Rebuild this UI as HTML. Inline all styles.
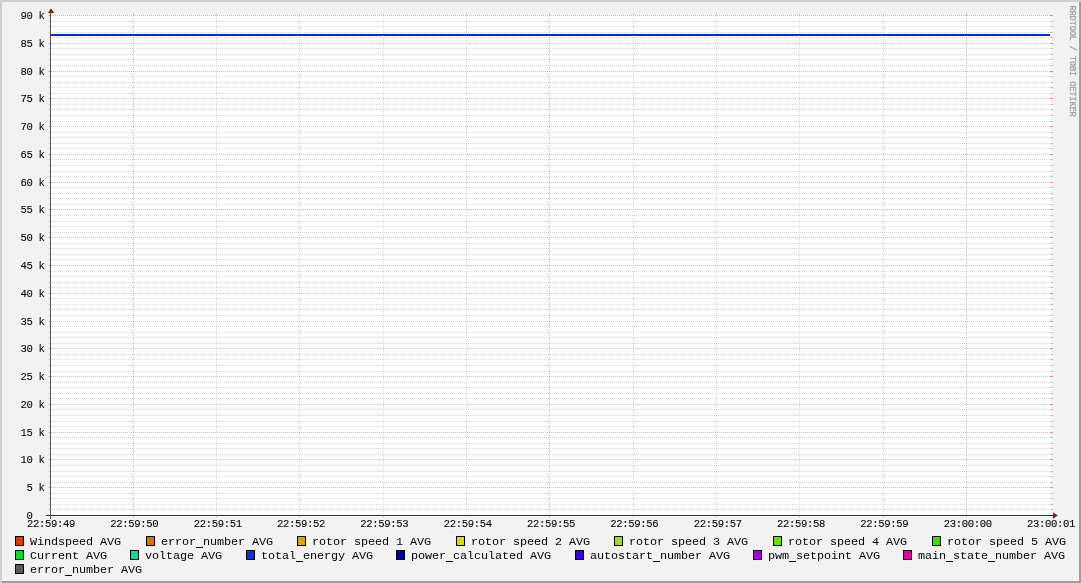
<!DOCTYPE html><html><head><meta charset="utf-8"><style>html,body{margin:0;padding:0;background:#f2f2f2;}svg{display:block;position:absolute;left:0;top:0;}text{font-family:"Liberation Mono",monospace;white-space:pre;}</style></head><body>
<svg width="1081" height="583" viewBox="0 0 1081 583">
<defs><pattern id="hg" patternUnits="userSpaceOnUse" x="0" y="0" width="2" height="1"><rect x="0" y="0" width="1" height="1" fill="rgba(144,144,144,0.35)"/></pattern><pattern id="hm" patternUnits="userSpaceOnUse" x="1" y="0" width="2" height="1"><rect x="0" y="0" width="1" height="1" fill="rgba(228,79,79,0.45)"/></pattern><pattern id="vg" patternUnits="userSpaceOnUse" x="0" y="1" width="1" height="2"><rect x="0" y="0" width="1" height="1" fill="rgba(144,144,144,0.35)"/></pattern><pattern id="vm" patternUnits="userSpaceOnUse" x="0" y="1" width="1" height="2"><rect x="0" y="0" width="1" height="1" fill="rgba(228,79,79,0.45)"/></pattern></defs>
<g shape-rendering="crispEdges">
<rect x="0" y="0" width="1081" height="583" fill="#f2f2f2"/>
<rect x="0" y="0" width="1081" height="2" fill="#cfcfcf"/>
<rect x="0" y="0" width="2" height="583" fill="#cfcfcf"/>
<rect x="1079" y="2" width="2" height="581" fill="#9e9e9e"/>
<rect x="2" y="581" width="1079" height="2" fill="#9e9e9e"/>
<rect x="50" y="15" width="1001" height="502" fill="#ffffff"/>
<rect x="51" y="34" width="999" height="2" fill="#0028e0"/>
<rect x="48" y="515" width="1002" height="1" fill="url(#hm)"/>
<rect x="48" y="515" width="1" height="1" fill="#f6caca"/>
<rect x="49" y="515" width="1" height="1" fill="#e58c8c"/>
<rect x="1050" y="515" width="3" height="1" fill="#e58c8c"/>
<rect x="52" y="509" width="998" height="1" fill="url(#hg)"/>
<rect x="48" y="509" width="1" height="1" fill="#e2e2e2"/>
<rect x="49" y="509" width="1" height="1" fill="#c4c4c4"/>
<rect x="1050" y="509" width="3" height="1" fill="#c4c4c4"/>
<rect x="52" y="504" width="998" height="1" fill="url(#hg)"/>
<rect x="48" y="504" width="1" height="1" fill="#e2e2e2"/>
<rect x="49" y="504" width="1" height="1" fill="#c4c4c4"/>
<rect x="1050" y="504" width="3" height="1" fill="#c4c4c4"/>
<rect x="52" y="498" width="998" height="1" fill="url(#hg)"/>
<rect x="48" y="498" width="1" height="1" fill="#e2e2e2"/>
<rect x="49" y="498" width="1" height="1" fill="#c4c4c4"/>
<rect x="1050" y="498" width="3" height="1" fill="#c4c4c4"/>
<rect x="52" y="493" width="998" height="1" fill="url(#hg)"/>
<rect x="48" y="493" width="1" height="1" fill="#e2e2e2"/>
<rect x="49" y="493" width="1" height="1" fill="#c4c4c4"/>
<rect x="1050" y="493" width="3" height="1" fill="#c4c4c4"/>
<rect x="48" y="487" width="1002" height="1" fill="url(#hm)"/>
<rect x="48" y="487" width="1" height="1" fill="#f6caca"/>
<rect x="49" y="487" width="1" height="1" fill="#e58c8c"/>
<rect x="1050" y="487" width="3" height="1" fill="#e58c8c"/>
<rect x="52" y="482" width="998" height="1" fill="url(#hg)"/>
<rect x="48" y="482" width="1" height="1" fill="#e2e2e2"/>
<rect x="49" y="482" width="1" height="1" fill="#c4c4c4"/>
<rect x="1050" y="482" width="3" height="1" fill="#c4c4c4"/>
<rect x="52" y="476" width="998" height="1" fill="url(#hg)"/>
<rect x="48" y="476" width="1" height="1" fill="#e2e2e2"/>
<rect x="49" y="476" width="1" height="1" fill="#c4c4c4"/>
<rect x="1050" y="476" width="3" height="1" fill="#c4c4c4"/>
<rect x="52" y="471" width="998" height="1" fill="url(#hg)"/>
<rect x="48" y="471" width="1" height="1" fill="#e2e2e2"/>
<rect x="49" y="471" width="1" height="1" fill="#c4c4c4"/>
<rect x="1050" y="471" width="3" height="1" fill="#c4c4c4"/>
<rect x="52" y="465" width="998" height="1" fill="url(#hg)"/>
<rect x="48" y="465" width="1" height="1" fill="#e2e2e2"/>
<rect x="49" y="465" width="1" height="1" fill="#c4c4c4"/>
<rect x="1050" y="465" width="3" height="1" fill="#c4c4c4"/>
<rect x="48" y="459" width="1002" height="1" fill="url(#hm)"/>
<rect x="48" y="459" width="1" height="1" fill="#f6caca"/>
<rect x="49" y="459" width="1" height="1" fill="#e58c8c"/>
<rect x="1050" y="459" width="3" height="1" fill="#e58c8c"/>
<rect x="52" y="454" width="998" height="1" fill="url(#hg)"/>
<rect x="48" y="454" width="1" height="1" fill="#e2e2e2"/>
<rect x="49" y="454" width="1" height="1" fill="#c4c4c4"/>
<rect x="1050" y="454" width="3" height="1" fill="#c4c4c4"/>
<rect x="52" y="448" width="998" height="1" fill="url(#hg)"/>
<rect x="48" y="448" width="1" height="1" fill="#e2e2e2"/>
<rect x="49" y="448" width="1" height="1" fill="#c4c4c4"/>
<rect x="1050" y="448" width="3" height="1" fill="#c4c4c4"/>
<rect x="52" y="443" width="998" height="1" fill="url(#hg)"/>
<rect x="48" y="443" width="1" height="1" fill="#e2e2e2"/>
<rect x="49" y="443" width="1" height="1" fill="#c4c4c4"/>
<rect x="1050" y="443" width="3" height="1" fill="#c4c4c4"/>
<rect x="52" y="437" width="998" height="1" fill="url(#hg)"/>
<rect x="48" y="437" width="1" height="1" fill="#e2e2e2"/>
<rect x="49" y="437" width="1" height="1" fill="#c4c4c4"/>
<rect x="1050" y="437" width="3" height="1" fill="#c4c4c4"/>
<rect x="48" y="432" width="1002" height="1" fill="url(#hm)"/>
<rect x="48" y="432" width="1" height="1" fill="#f6caca"/>
<rect x="49" y="432" width="1" height="1" fill="#e58c8c"/>
<rect x="1050" y="432" width="3" height="1" fill="#e58c8c"/>
<rect x="52" y="426" width="998" height="1" fill="url(#hg)"/>
<rect x="48" y="426" width="1" height="1" fill="#e2e2e2"/>
<rect x="49" y="426" width="1" height="1" fill="#c4c4c4"/>
<rect x="1050" y="426" width="3" height="1" fill="#c4c4c4"/>
<rect x="52" y="421" width="998" height="1" fill="url(#hg)"/>
<rect x="48" y="421" width="1" height="1" fill="#e2e2e2"/>
<rect x="49" y="421" width="1" height="1" fill="#c4c4c4"/>
<rect x="1050" y="421" width="3" height="1" fill="#c4c4c4"/>
<rect x="52" y="415" width="998" height="1" fill="url(#hg)"/>
<rect x="48" y="415" width="1" height="1" fill="#e2e2e2"/>
<rect x="49" y="415" width="1" height="1" fill="#c4c4c4"/>
<rect x="1050" y="415" width="3" height="1" fill="#c4c4c4"/>
<rect x="52" y="409" width="998" height="1" fill="url(#hg)"/>
<rect x="48" y="409" width="1" height="1" fill="#e2e2e2"/>
<rect x="49" y="409" width="1" height="1" fill="#c4c4c4"/>
<rect x="1050" y="409" width="3" height="1" fill="#c4c4c4"/>
<rect x="48" y="404" width="1002" height="1" fill="url(#hm)"/>
<rect x="48" y="404" width="1" height="1" fill="#f6caca"/>
<rect x="49" y="404" width="1" height="1" fill="#e58c8c"/>
<rect x="1050" y="404" width="3" height="1" fill="#e58c8c"/>
<rect x="52" y="398" width="998" height="1" fill="url(#hg)"/>
<rect x="48" y="398" width="1" height="1" fill="#e2e2e2"/>
<rect x="49" y="398" width="1" height="1" fill="#c4c4c4"/>
<rect x="1050" y="398" width="3" height="1" fill="#c4c4c4"/>
<rect x="52" y="393" width="998" height="1" fill="url(#hg)"/>
<rect x="48" y="393" width="1" height="1" fill="#e2e2e2"/>
<rect x="49" y="393" width="1" height="1" fill="#c4c4c4"/>
<rect x="1050" y="393" width="3" height="1" fill="#c4c4c4"/>
<rect x="52" y="387" width="998" height="1" fill="url(#hg)"/>
<rect x="48" y="387" width="1" height="1" fill="#e2e2e2"/>
<rect x="49" y="387" width="1" height="1" fill="#c4c4c4"/>
<rect x="1050" y="387" width="3" height="1" fill="#c4c4c4"/>
<rect x="52" y="382" width="998" height="1" fill="url(#hg)"/>
<rect x="48" y="382" width="1" height="1" fill="#e2e2e2"/>
<rect x="49" y="382" width="1" height="1" fill="#c4c4c4"/>
<rect x="1050" y="382" width="3" height="1" fill="#c4c4c4"/>
<rect x="48" y="376" width="1002" height="1" fill="url(#hm)"/>
<rect x="48" y="376" width="1" height="1" fill="#f6caca"/>
<rect x="49" y="376" width="1" height="1" fill="#e58c8c"/>
<rect x="1050" y="376" width="3" height="1" fill="#e58c8c"/>
<rect x="52" y="371" width="998" height="1" fill="url(#hg)"/>
<rect x="48" y="371" width="1" height="1" fill="#e2e2e2"/>
<rect x="49" y="371" width="1" height="1" fill="#c4c4c4"/>
<rect x="1050" y="371" width="3" height="1" fill="#c4c4c4"/>
<rect x="52" y="365" width="998" height="1" fill="url(#hg)"/>
<rect x="48" y="365" width="1" height="1" fill="#e2e2e2"/>
<rect x="49" y="365" width="1" height="1" fill="#c4c4c4"/>
<rect x="1050" y="365" width="3" height="1" fill="#c4c4c4"/>
<rect x="52" y="359" width="998" height="1" fill="url(#hg)"/>
<rect x="48" y="359" width="1" height="1" fill="#e2e2e2"/>
<rect x="49" y="359" width="1" height="1" fill="#c4c4c4"/>
<rect x="1050" y="359" width="3" height="1" fill="#c4c4c4"/>
<rect x="52" y="354" width="998" height="1" fill="url(#hg)"/>
<rect x="48" y="354" width="1" height="1" fill="#e2e2e2"/>
<rect x="49" y="354" width="1" height="1" fill="#c4c4c4"/>
<rect x="1050" y="354" width="3" height="1" fill="#c4c4c4"/>
<rect x="48" y="348" width="1002" height="1" fill="url(#hm)"/>
<rect x="48" y="348" width="1" height="1" fill="#f6caca"/>
<rect x="49" y="348" width="1" height="1" fill="#e58c8c"/>
<rect x="1050" y="348" width="3" height="1" fill="#e58c8c"/>
<rect x="52" y="343" width="998" height="1" fill="url(#hg)"/>
<rect x="48" y="343" width="1" height="1" fill="#e2e2e2"/>
<rect x="49" y="343" width="1" height="1" fill="#c4c4c4"/>
<rect x="1050" y="343" width="3" height="1" fill="#c4c4c4"/>
<rect x="52" y="337" width="998" height="1" fill="url(#hg)"/>
<rect x="48" y="337" width="1" height="1" fill="#e2e2e2"/>
<rect x="49" y="337" width="1" height="1" fill="#c4c4c4"/>
<rect x="1050" y="337" width="3" height="1" fill="#c4c4c4"/>
<rect x="52" y="332" width="998" height="1" fill="url(#hg)"/>
<rect x="48" y="332" width="1" height="1" fill="#e2e2e2"/>
<rect x="49" y="332" width="1" height="1" fill="#c4c4c4"/>
<rect x="1050" y="332" width="3" height="1" fill="#c4c4c4"/>
<rect x="52" y="326" width="998" height="1" fill="url(#hg)"/>
<rect x="48" y="326" width="1" height="1" fill="#e2e2e2"/>
<rect x="49" y="326" width="1" height="1" fill="#c4c4c4"/>
<rect x="1050" y="326" width="3" height="1" fill="#c4c4c4"/>
<rect x="48" y="321" width="1002" height="1" fill="url(#hm)"/>
<rect x="48" y="321" width="1" height="1" fill="#f6caca"/>
<rect x="49" y="321" width="1" height="1" fill="#e58c8c"/>
<rect x="1050" y="321" width="3" height="1" fill="#e58c8c"/>
<rect x="52" y="315" width="998" height="1" fill="url(#hg)"/>
<rect x="48" y="315" width="1" height="1" fill="#e2e2e2"/>
<rect x="49" y="315" width="1" height="1" fill="#c4c4c4"/>
<rect x="1050" y="315" width="3" height="1" fill="#c4c4c4"/>
<rect x="52" y="309" width="998" height="1" fill="url(#hg)"/>
<rect x="48" y="309" width="1" height="1" fill="#e2e2e2"/>
<rect x="49" y="309" width="1" height="1" fill="#c4c4c4"/>
<rect x="1050" y="309" width="3" height="1" fill="#c4c4c4"/>
<rect x="52" y="304" width="998" height="1" fill="url(#hg)"/>
<rect x="48" y="304" width="1" height="1" fill="#e2e2e2"/>
<rect x="49" y="304" width="1" height="1" fill="#c4c4c4"/>
<rect x="1050" y="304" width="3" height="1" fill="#c4c4c4"/>
<rect x="52" y="298" width="998" height="1" fill="url(#hg)"/>
<rect x="48" y="298" width="1" height="1" fill="#e2e2e2"/>
<rect x="49" y="298" width="1" height="1" fill="#c4c4c4"/>
<rect x="1050" y="298" width="3" height="1" fill="#c4c4c4"/>
<rect x="48" y="293" width="1002" height="1" fill="url(#hm)"/>
<rect x="48" y="293" width="1" height="1" fill="#f6caca"/>
<rect x="49" y="293" width="1" height="1" fill="#e58c8c"/>
<rect x="1050" y="293" width="3" height="1" fill="#e58c8c"/>
<rect x="52" y="287" width="998" height="1" fill="url(#hg)"/>
<rect x="48" y="287" width="1" height="1" fill="#e2e2e2"/>
<rect x="49" y="287" width="1" height="1" fill="#c4c4c4"/>
<rect x="1050" y="287" width="3" height="1" fill="#c4c4c4"/>
<rect x="52" y="282" width="998" height="1" fill="url(#hg)"/>
<rect x="48" y="282" width="1" height="1" fill="#e2e2e2"/>
<rect x="49" y="282" width="1" height="1" fill="#c4c4c4"/>
<rect x="1050" y="282" width="3" height="1" fill="#c4c4c4"/>
<rect x="52" y="276" width="998" height="1" fill="url(#hg)"/>
<rect x="48" y="276" width="1" height="1" fill="#e2e2e2"/>
<rect x="49" y="276" width="1" height="1" fill="#c4c4c4"/>
<rect x="1050" y="276" width="3" height="1" fill="#c4c4c4"/>
<rect x="52" y="271" width="998" height="1" fill="url(#hg)"/>
<rect x="48" y="271" width="1" height="1" fill="#e2e2e2"/>
<rect x="49" y="271" width="1" height="1" fill="#c4c4c4"/>
<rect x="1050" y="271" width="3" height="1" fill="#c4c4c4"/>
<rect x="48" y="265" width="1002" height="1" fill="url(#hm)"/>
<rect x="48" y="265" width="1" height="1" fill="#f6caca"/>
<rect x="49" y="265" width="1" height="1" fill="#e58c8c"/>
<rect x="1050" y="265" width="3" height="1" fill="#e58c8c"/>
<rect x="52" y="259" width="998" height="1" fill="url(#hg)"/>
<rect x="48" y="259" width="1" height="1" fill="#e2e2e2"/>
<rect x="49" y="259" width="1" height="1" fill="#c4c4c4"/>
<rect x="1050" y="259" width="3" height="1" fill="#c4c4c4"/>
<rect x="52" y="254" width="998" height="1" fill="url(#hg)"/>
<rect x="48" y="254" width="1" height="1" fill="#e2e2e2"/>
<rect x="49" y="254" width="1" height="1" fill="#c4c4c4"/>
<rect x="1050" y="254" width="3" height="1" fill="#c4c4c4"/>
<rect x="52" y="248" width="998" height="1" fill="url(#hg)"/>
<rect x="48" y="248" width="1" height="1" fill="#e2e2e2"/>
<rect x="49" y="248" width="1" height="1" fill="#c4c4c4"/>
<rect x="1050" y="248" width="3" height="1" fill="#c4c4c4"/>
<rect x="52" y="243" width="998" height="1" fill="url(#hg)"/>
<rect x="48" y="243" width="1" height="1" fill="#e2e2e2"/>
<rect x="49" y="243" width="1" height="1" fill="#c4c4c4"/>
<rect x="1050" y="243" width="3" height="1" fill="#c4c4c4"/>
<rect x="48" y="237" width="1002" height="1" fill="url(#hm)"/>
<rect x="48" y="237" width="1" height="1" fill="#f6caca"/>
<rect x="49" y="237" width="1" height="1" fill="#e58c8c"/>
<rect x="1050" y="237" width="3" height="1" fill="#e58c8c"/>
<rect x="52" y="232" width="998" height="1" fill="url(#hg)"/>
<rect x="48" y="232" width="1" height="1" fill="#e2e2e2"/>
<rect x="49" y="232" width="1" height="1" fill="#c4c4c4"/>
<rect x="1050" y="232" width="3" height="1" fill="#c4c4c4"/>
<rect x="52" y="226" width="998" height="1" fill="url(#hg)"/>
<rect x="48" y="226" width="1" height="1" fill="#e2e2e2"/>
<rect x="49" y="226" width="1" height="1" fill="#c4c4c4"/>
<rect x="1050" y="226" width="3" height="1" fill="#c4c4c4"/>
<rect x="52" y="221" width="998" height="1" fill="url(#hg)"/>
<rect x="48" y="221" width="1" height="1" fill="#e2e2e2"/>
<rect x="49" y="221" width="1" height="1" fill="#c4c4c4"/>
<rect x="1050" y="221" width="3" height="1" fill="#c4c4c4"/>
<rect x="52" y="215" width="998" height="1" fill="url(#hg)"/>
<rect x="48" y="215" width="1" height="1" fill="#e2e2e2"/>
<rect x="49" y="215" width="1" height="1" fill="#c4c4c4"/>
<rect x="1050" y="215" width="3" height="1" fill="#c4c4c4"/>
<rect x="48" y="209" width="1002" height="1" fill="url(#hm)"/>
<rect x="48" y="209" width="1" height="1" fill="#f6caca"/>
<rect x="49" y="209" width="1" height="1" fill="#e58c8c"/>
<rect x="1050" y="209" width="3" height="1" fill="#e58c8c"/>
<rect x="52" y="204" width="998" height="1" fill="url(#hg)"/>
<rect x="48" y="204" width="1" height="1" fill="#e2e2e2"/>
<rect x="49" y="204" width="1" height="1" fill="#c4c4c4"/>
<rect x="1050" y="204" width="3" height="1" fill="#c4c4c4"/>
<rect x="52" y="198" width="998" height="1" fill="url(#hg)"/>
<rect x="48" y="198" width="1" height="1" fill="#e2e2e2"/>
<rect x="49" y="198" width="1" height="1" fill="#c4c4c4"/>
<rect x="1050" y="198" width="3" height="1" fill="#c4c4c4"/>
<rect x="52" y="193" width="998" height="1" fill="url(#hg)"/>
<rect x="48" y="193" width="1" height="1" fill="#e2e2e2"/>
<rect x="49" y="193" width="1" height="1" fill="#c4c4c4"/>
<rect x="1050" y="193" width="3" height="1" fill="#c4c4c4"/>
<rect x="52" y="187" width="998" height="1" fill="url(#hg)"/>
<rect x="48" y="187" width="1" height="1" fill="#e2e2e2"/>
<rect x="49" y="187" width="1" height="1" fill="#c4c4c4"/>
<rect x="1050" y="187" width="3" height="1" fill="#c4c4c4"/>
<rect x="48" y="182" width="1002" height="1" fill="url(#hm)"/>
<rect x="48" y="182" width="1" height="1" fill="#f6caca"/>
<rect x="49" y="182" width="1" height="1" fill="#e58c8c"/>
<rect x="1050" y="182" width="3" height="1" fill="#e58c8c"/>
<rect x="52" y="176" width="998" height="1" fill="url(#hg)"/>
<rect x="48" y="176" width="1" height="1" fill="#e2e2e2"/>
<rect x="49" y="176" width="1" height="1" fill="#c4c4c4"/>
<rect x="1050" y="176" width="3" height="1" fill="#c4c4c4"/>
<rect x="52" y="171" width="998" height="1" fill="url(#hg)"/>
<rect x="48" y="171" width="1" height="1" fill="#e2e2e2"/>
<rect x="49" y="171" width="1" height="1" fill="#c4c4c4"/>
<rect x="1050" y="171" width="3" height="1" fill="#c4c4c4"/>
<rect x="52" y="165" width="998" height="1" fill="url(#hg)"/>
<rect x="48" y="165" width="1" height="1" fill="#e2e2e2"/>
<rect x="49" y="165" width="1" height="1" fill="#c4c4c4"/>
<rect x="1050" y="165" width="3" height="1" fill="#c4c4c4"/>
<rect x="52" y="159" width="998" height="1" fill="url(#hg)"/>
<rect x="48" y="159" width="1" height="1" fill="#e2e2e2"/>
<rect x="49" y="159" width="1" height="1" fill="#c4c4c4"/>
<rect x="1050" y="159" width="3" height="1" fill="#c4c4c4"/>
<rect x="48" y="154" width="1002" height="1" fill="url(#hm)"/>
<rect x="48" y="154" width="1" height="1" fill="#f6caca"/>
<rect x="49" y="154" width="1" height="1" fill="#e58c8c"/>
<rect x="1050" y="154" width="3" height="1" fill="#e58c8c"/>
<rect x="52" y="148" width="998" height="1" fill="url(#hg)"/>
<rect x="48" y="148" width="1" height="1" fill="#e2e2e2"/>
<rect x="49" y="148" width="1" height="1" fill="#c4c4c4"/>
<rect x="1050" y="148" width="3" height="1" fill="#c4c4c4"/>
<rect x="52" y="143" width="998" height="1" fill="url(#hg)"/>
<rect x="48" y="143" width="1" height="1" fill="#e2e2e2"/>
<rect x="49" y="143" width="1" height="1" fill="#c4c4c4"/>
<rect x="1050" y="143" width="3" height="1" fill="#c4c4c4"/>
<rect x="52" y="137" width="998" height="1" fill="url(#hg)"/>
<rect x="48" y="137" width="1" height="1" fill="#e2e2e2"/>
<rect x="49" y="137" width="1" height="1" fill="#c4c4c4"/>
<rect x="1050" y="137" width="3" height="1" fill="#c4c4c4"/>
<rect x="52" y="132" width="998" height="1" fill="url(#hg)"/>
<rect x="48" y="132" width="1" height="1" fill="#e2e2e2"/>
<rect x="49" y="132" width="1" height="1" fill="#c4c4c4"/>
<rect x="1050" y="132" width="3" height="1" fill="#c4c4c4"/>
<rect x="48" y="126" width="1002" height="1" fill="url(#hm)"/>
<rect x="48" y="126" width="1" height="1" fill="#f6caca"/>
<rect x="49" y="126" width="1" height="1" fill="#e58c8c"/>
<rect x="1050" y="126" width="3" height="1" fill="#e58c8c"/>
<rect x="52" y="121" width="998" height="1" fill="url(#hg)"/>
<rect x="48" y="121" width="1" height="1" fill="#e2e2e2"/>
<rect x="49" y="121" width="1" height="1" fill="#c4c4c4"/>
<rect x="1050" y="121" width="3" height="1" fill="#c4c4c4"/>
<rect x="52" y="115" width="998" height="1" fill="url(#hg)"/>
<rect x="48" y="115" width="1" height="1" fill="#e2e2e2"/>
<rect x="49" y="115" width="1" height="1" fill="#c4c4c4"/>
<rect x="1050" y="115" width="3" height="1" fill="#c4c4c4"/>
<rect x="52" y="109" width="998" height="1" fill="url(#hg)"/>
<rect x="48" y="109" width="1" height="1" fill="#e2e2e2"/>
<rect x="49" y="109" width="1" height="1" fill="#c4c4c4"/>
<rect x="1050" y="109" width="3" height="1" fill="#c4c4c4"/>
<rect x="52" y="104" width="998" height="1" fill="url(#hg)"/>
<rect x="48" y="104" width="1" height="1" fill="#e2e2e2"/>
<rect x="49" y="104" width="1" height="1" fill="#c4c4c4"/>
<rect x="1050" y="104" width="3" height="1" fill="#c4c4c4"/>
<rect x="48" y="98" width="1002" height="1" fill="url(#hm)"/>
<rect x="48" y="98" width="1" height="1" fill="#f6caca"/>
<rect x="49" y="98" width="1" height="1" fill="#e58c8c"/>
<rect x="1050" y="98" width="3" height="1" fill="#e58c8c"/>
<rect x="52" y="93" width="998" height="1" fill="url(#hg)"/>
<rect x="48" y="93" width="1" height="1" fill="#e2e2e2"/>
<rect x="49" y="93" width="1" height="1" fill="#c4c4c4"/>
<rect x="1050" y="93" width="3" height="1" fill="#c4c4c4"/>
<rect x="52" y="87" width="998" height="1" fill="url(#hg)"/>
<rect x="48" y="87" width="1" height="1" fill="#e2e2e2"/>
<rect x="49" y="87" width="1" height="1" fill="#c4c4c4"/>
<rect x="1050" y="87" width="3" height="1" fill="#c4c4c4"/>
<rect x="52" y="82" width="998" height="1" fill="url(#hg)"/>
<rect x="48" y="82" width="1" height="1" fill="#e2e2e2"/>
<rect x="49" y="82" width="1" height="1" fill="#c4c4c4"/>
<rect x="1050" y="82" width="3" height="1" fill="#c4c4c4"/>
<rect x="52" y="76" width="998" height="1" fill="url(#hg)"/>
<rect x="48" y="76" width="1" height="1" fill="#e2e2e2"/>
<rect x="49" y="76" width="1" height="1" fill="#c4c4c4"/>
<rect x="1050" y="76" width="3" height="1" fill="#c4c4c4"/>
<rect x="48" y="71" width="1002" height="1" fill="url(#hm)"/>
<rect x="48" y="71" width="1" height="1" fill="#f6caca"/>
<rect x="49" y="71" width="1" height="1" fill="#e58c8c"/>
<rect x="1050" y="71" width="3" height="1" fill="#e58c8c"/>
<rect x="52" y="65" width="998" height="1" fill="url(#hg)"/>
<rect x="48" y="65" width="1" height="1" fill="#e2e2e2"/>
<rect x="49" y="65" width="1" height="1" fill="#c4c4c4"/>
<rect x="1050" y="65" width="3" height="1" fill="#c4c4c4"/>
<rect x="52" y="59" width="998" height="1" fill="url(#hg)"/>
<rect x="48" y="59" width="1" height="1" fill="#e2e2e2"/>
<rect x="49" y="59" width="1" height="1" fill="#c4c4c4"/>
<rect x="1050" y="59" width="3" height="1" fill="#c4c4c4"/>
<rect x="52" y="54" width="998" height="1" fill="url(#hg)"/>
<rect x="48" y="54" width="1" height="1" fill="#e2e2e2"/>
<rect x="49" y="54" width="1" height="1" fill="#c4c4c4"/>
<rect x="1050" y="54" width="3" height="1" fill="#c4c4c4"/>
<rect x="52" y="48" width="998" height="1" fill="url(#hg)"/>
<rect x="48" y="48" width="1" height="1" fill="#e2e2e2"/>
<rect x="49" y="48" width="1" height="1" fill="#c4c4c4"/>
<rect x="1050" y="48" width="3" height="1" fill="#c4c4c4"/>
<rect x="48" y="43" width="1002" height="1" fill="url(#hm)"/>
<rect x="48" y="43" width="1" height="1" fill="#f6caca"/>
<rect x="49" y="43" width="1" height="1" fill="#e58c8c"/>
<rect x="1050" y="43" width="3" height="1" fill="#e58c8c"/>
<rect x="52" y="37" width="998" height="1" fill="url(#hg)"/>
<rect x="48" y="37" width="1" height="1" fill="#e2e2e2"/>
<rect x="49" y="37" width="1" height="1" fill="#c4c4c4"/>
<rect x="1050" y="37" width="3" height="1" fill="#c4c4c4"/>
<rect x="52" y="32" width="998" height="1" fill="url(#hg)"/>
<rect x="48" y="32" width="1" height="1" fill="#e2e2e2"/>
<rect x="49" y="32" width="1" height="1" fill="#c4c4c4"/>
<rect x="1050" y="32" width="3" height="1" fill="#c4c4c4"/>
<rect x="52" y="26" width="998" height="1" fill="url(#hg)"/>
<rect x="48" y="26" width="1" height="1" fill="#e2e2e2"/>
<rect x="49" y="26" width="1" height="1" fill="#c4c4c4"/>
<rect x="1050" y="26" width="3" height="1" fill="#c4c4c4"/>
<rect x="52" y="21" width="998" height="1" fill="url(#hg)"/>
<rect x="48" y="21" width="1" height="1" fill="#e2e2e2"/>
<rect x="49" y="21" width="1" height="1" fill="#c4c4c4"/>
<rect x="1050" y="21" width="3" height="1" fill="#c4c4c4"/>
<rect x="48" y="15" width="1002" height="1" fill="url(#hm)"/>
<rect x="48" y="15" width="1" height="1" fill="#f6caca"/>
<rect x="49" y="15" width="1" height="1" fill="#e58c8c"/>
<rect x="1050" y="15" width="3" height="1" fill="#e58c8c"/>
<rect x="133" y="13" width="1" height="502" fill="url(#vm)"/>
<rect x="133" y="516" width="1" height="2" fill="#f0b4b4"/>
<rect x="133" y="13" width="1" height="2" fill="#f0b4b4"/>
<rect x="216" y="13" width="1" height="502" fill="url(#vg)"/>
<rect x="216" y="516" width="1" height="2" fill="#d2d2d2"/>
<rect x="216" y="13" width="1" height="2" fill="#d2d2d2"/>
<rect x="299" y="13" width="1" height="502" fill="url(#vg)"/>
<rect x="299" y="516" width="1" height="2" fill="#d2d2d2"/>
<rect x="299" y="13" width="1" height="2" fill="#d2d2d2"/>
<rect x="383" y="13" width="1" height="502" fill="url(#vg)"/>
<rect x="383" y="516" width="1" height="2" fill="#d2d2d2"/>
<rect x="383" y="13" width="1" height="2" fill="#d2d2d2"/>
<rect x="466" y="13" width="1" height="502" fill="url(#vg)"/>
<rect x="466" y="516" width="1" height="2" fill="#d2d2d2"/>
<rect x="466" y="13" width="1" height="2" fill="#d2d2d2"/>
<rect x="549" y="13" width="1" height="502" fill="url(#vm)"/>
<rect x="549" y="516" width="1" height="2" fill="#f0b4b4"/>
<rect x="549" y="13" width="1" height="2" fill="#f0b4b4"/>
<rect x="633" y="13" width="1" height="502" fill="url(#vg)"/>
<rect x="633" y="516" width="1" height="2" fill="#d2d2d2"/>
<rect x="633" y="13" width="1" height="2" fill="#d2d2d2"/>
<rect x="716" y="13" width="1" height="502" fill="url(#vg)"/>
<rect x="716" y="516" width="1" height="2" fill="#d2d2d2"/>
<rect x="716" y="13" width="1" height="2" fill="#d2d2d2"/>
<rect x="799" y="13" width="1" height="502" fill="url(#vg)"/>
<rect x="799" y="516" width="1" height="2" fill="#d2d2d2"/>
<rect x="799" y="13" width="1" height="2" fill="#d2d2d2"/>
<rect x="883" y="13" width="1" height="502" fill="url(#vg)"/>
<rect x="883" y="516" width="1" height="2" fill="#d2d2d2"/>
<rect x="883" y="13" width="1" height="2" fill="#d2d2d2"/>
<rect x="966" y="13" width="1" height="502" fill="url(#vm)"/>
<rect x="966" y="516" width="1" height="2" fill="#f0b4b4"/>
<rect x="966" y="13" width="1" height="2" fill="#f0b4b4"/>
<rect x="46" y="515" width="1007" height="1" fill="#2e2e2e"/>
<rect x="50" y="11" width="1" height="508" fill="#555555"/>
<pattern id="ax" patternUnits="userSpaceOnUse" x="1" y="0" width="2" height="1"><rect x="0" y="0" width="1" height="1" fill="#462828"/></pattern>
<rect x="51" y="515" width="998" height="1" fill="url(#ax)"/>
</g>
<polygon points="1053,512.3 1053,518.7 1057.8,515.5" fill="#7f1f1f"/>
<polygon points="48,13 54.2,13 51,8.2" fill="#7f1f1f"/>
</svg>
<svg width="1081" height="583" viewBox="0 0 1081 583" style="position:absolute;left:0;top:0;will-change:transform">
<g font-size="10.60" fill="#000" stroke="#000" stroke-width="0.08" letter-spacing="-0.361">
<text x="20.4" y="0" transform="translate(0 519.000) scale(1 1.000)"> 0</text>
<text x="20.4" y="0" transform="translate(0 491.000) scale(1 1.000)"> 5 k</text>
<text x="20.4" y="0" transform="translate(0 463.000) scale(1 1.000)">10 k</text>
<text x="20.4" y="0" transform="translate(0 436.000) scale(1 1.000)">15 k</text>
<text x="20.4" y="0" transform="translate(0 408.000) scale(1 1.000)">20 k</text>
<text x="20.4" y="0" transform="translate(0 380.000) scale(1 1.000)">25 k</text>
<text x="20.4" y="0" transform="translate(0 352.000) scale(1 1.000)">30 k</text>
<text x="20.4" y="0" transform="translate(0 325.000) scale(1 1.000)">35 k</text>
<text x="20.4" y="0" transform="translate(0 297.000) scale(1 1.000)">40 k</text>
<text x="20.4" y="0" transform="translate(0 269.000) scale(1 1.000)">45 k</text>
<text x="20.4" y="0" transform="translate(0 241.000) scale(1 1.000)">50 k</text>
<text x="20.4" y="0" transform="translate(0 213.000) scale(1 1.000)">55 k</text>
<text x="20.4" y="0" transform="translate(0 186.000) scale(1 1.000)">60 k</text>
<text x="20.4" y="0" transform="translate(0 158.000) scale(1 1.000)">65 k</text>
<text x="20.4" y="0" transform="translate(0 130.000) scale(1 1.000)">70 k</text>
<text x="20.4" y="0" transform="translate(0 102.000) scale(1 1.000)">75 k</text>
<text x="20.4" y="0" transform="translate(0 75.000) scale(1 1.000)">80 k</text>
<text x="20.4" y="0" transform="translate(0 47.000) scale(1 1.000)">85 k</text>
<text x="20.4" y="0" transform="translate(0 19.000) scale(1 1.000)">90 k</text>
<text x="27.00" y="0" transform="translate(0 527) scale(1 1.000)">22:59:49</text>
<text x="110.33" y="0" transform="translate(0 527) scale(1 1.000)">22:59:50</text>
<text x="193.67" y="0" transform="translate(0 527) scale(1 1.000)">22:59:51</text>
<text x="277.00" y="0" transform="translate(0 527) scale(1 1.000)">22:59:52</text>
<text x="360.33" y="0" transform="translate(0 527) scale(1 1.000)">22:59:53</text>
<text x="443.67" y="0" transform="translate(0 527) scale(1 1.000)">22:59:54</text>
<text x="527.00" y="0" transform="translate(0 527) scale(1 1.000)">22:59:55</text>
<text x="610.33" y="0" transform="translate(0 527) scale(1 1.000)">22:59:56</text>
<text x="693.67" y="0" transform="translate(0 527) scale(1 1.000)">22:59:57</text>
<text x="777.00" y="0" transform="translate(0 527) scale(1 1.000)">22:59:58</text>
<text x="860.33" y="0" transform="translate(0 527) scale(1 1.000)">22:59:59</text>
<text x="943.67" y="0" transform="translate(0 527) scale(1 1.000)">23:00:00</text>
<text x="1027.00" y="0" transform="translate(0 527) scale(1 1.000)">23:00:01</text>
</g>
<g font-size="11.80" fill="#000" stroke="#000" stroke-width="0.00" letter-spacing="-0.081">
<rect x="15.5" y="536.5" width="8" height="9" fill="#de3c00" stroke="#000" stroke-width="1"/>
<text x="30" y="0" transform="translate(0 545) scale(1 1.000)">Windspeed AVG</text>
<rect x="146.5" y="536.5" width="8" height="9" fill="#de7400" stroke="#000" stroke-width="1"/>
<text x="161" y="0" transform="translate(0 545) scale(1 1.000)">error number AVG</text>
<rect x="297.5" y="536.5" width="8" height="9" fill="#dba800" stroke="#000" stroke-width="1"/>
<text x="312" y="0" transform="translate(0 545) scale(1 1.000)">rotor speed 1 AVG</text>
<rect x="456.5" y="536.5" width="8" height="9" fill="#d8dc00" stroke="#000" stroke-width="1"/>
<text x="471" y="0" transform="translate(0 545) scale(1 1.000)">rotor speed 2 AVG</text>
<rect x="614.5" y="536.5" width="8" height="9" fill="#a5de00" stroke="#000" stroke-width="1"/>
<text x="629" y="0" transform="translate(0 545) scale(1 1.000)">rotor speed 3 AVG</text>
<rect x="773.5" y="536.5" width="8" height="9" fill="#72de00" stroke="#000" stroke-width="1"/>
<text x="788" y="0" transform="translate(0 545) scale(1 1.000)">rotor speed 4 AVG</text>
<rect x="932.5" y="536.5" width="8" height="9" fill="#3ade00" stroke="#000" stroke-width="1"/>
<text x="947" y="0" transform="translate(0 545) scale(1 1.000)">rotor speed 5 AVG</text>
<rect x="15.5" y="550.5" width="8" height="9" fill="#00de3a" stroke="#000" stroke-width="1"/>
<text x="30" y="0" transform="translate(0 559) scale(1 1.000)">Current AVG</text>
<rect x="130.5" y="550.5" width="8" height="9" fill="#00dea5" stroke="#000" stroke-width="1"/>
<text x="145" y="0" transform="translate(0 559) scale(1 1.000)">voltage AVG</text>
<rect x="246.5" y="550.5" width="8" height="9" fill="#0038de" stroke="#000" stroke-width="1"/>
<text x="261" y="0" transform="translate(0 559) scale(1 1.000)">total energy AVG</text>
<rect x="396.5" y="550.5" width="8" height="9" fill="#0000a8" stroke="#000" stroke-width="1"/>
<text x="411" y="0" transform="translate(0 559) scale(1 1.000)">power calculated AVG</text>
<rect x="575.5" y="550.5" width="8" height="9" fill="#3a00de" stroke="#000" stroke-width="1"/>
<text x="590" y="0" transform="translate(0 559) scale(1 1.000)">autostart number AVG</text>
<rect x="753.5" y="550.5" width="8" height="9" fill="#a800de" stroke="#000" stroke-width="1"/>
<text x="768" y="0" transform="translate(0 559) scale(1 1.000)">pwm setpoint AVG</text>
<rect x="903.5" y="550.5" width="8" height="9" fill="#de00a5" stroke="#000" stroke-width="1"/>
<text x="918" y="0" transform="translate(0 559) scale(1 1.000)">main state number AVG</text>
<rect x="15.5" y="564.5" width="8" height="9" fill="#585858" stroke="#000" stroke-width="1"/>
<text x="30" y="0" transform="translate(0 573) scale(1 1.000)">error number AVG</text>
</g>
<g shape-rendering="crispEdges"><rect x="196" y="547" width="7" height="1" fill="#000"/><rect x="296" y="561" width="7" height="1" fill="#000"/><rect x="446" y="561" width="7" height="1" fill="#000"/><rect x="653" y="561" width="7" height="1" fill="#000"/><rect x="789" y="561" width="7" height="1" fill="#000"/><rect x="946" y="561" width="7" height="1" fill="#000"/><rect x="988" y="561" width="7" height="1" fill="#000"/><rect x="65" y="575" width="7" height="1" fill="#000"/></g>
<text x="0" y="0" font-size="8.60" fill="#a0a0a0" stroke="#a0a0a0" stroke-width="0.3" letter-spacing="-0.111" transform="translate(1070 5.5) rotate(90)">RRDTOOL / TOBI OETIKER</text>
</svg></body></html>
